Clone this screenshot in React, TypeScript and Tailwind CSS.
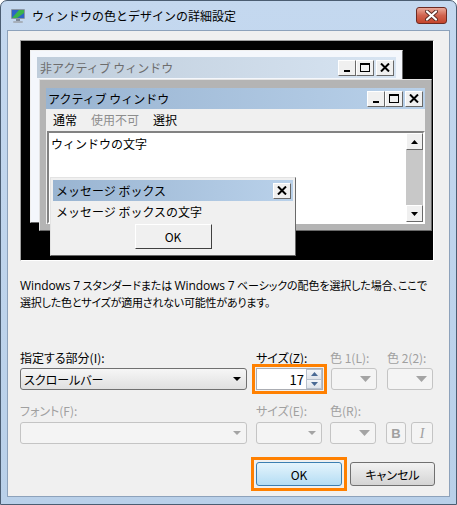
import React from 'react';

const raised = 'border border-t-white border-l-white border-r-[#696969] border-b-[#696969] bg-[#f0f0f0]';
const palt = "[font-feature-settings:'palt']";

function CapButton({ kind }: { kind: 'min' | 'max' | 'close' }) {
    return (
        <div className={`w-[18px] h-[16px] flex items-center justify-center ${raised}`}>
            {kind === 'min' && (
                <svg width="10" height="9" viewBox="0 0 10 9"><rect x="2" y="7" width="6" height="2" fill="#000" /></svg>
            )}
            {kind === 'max' && (
                <svg width="10" height="9" viewBox="0 0 10 9"><rect x="0.5" y="0.5" width="9" height="8" fill="none" stroke="#000" /><rect x="0" y="0" width="10" height="2" fill="#000" /></svg>
            )}
            {kind === 'close' && (
                <svg width="10" height="9" viewBox="0 0 10 9"><path d="M1 0.5 L9 8.5 M9 0.5 L1 8.5" stroke="#000" strokeWidth="2" /></svg>
            )}
        </div>
    );
}

function Arrow({ dir }: { dir: 'up' | 'down' }) {
    return (
        <div className={`w-[17px] h-[17px] flex items-center justify-center ${raised}`}>
            <svg width="7" height="4" viewBox="0 0 7 4">
                {dir === 'up' ? <path d="M0 4 L3.5 0 L7 4 Z" fill="#000" /> : <path d="M0 0 L7 0 L3.5 4 Z" fill="#000" />}
            </svg>
        </div>
    );
}

function Combo({ width, text, disabled, big }: { width: string; text?: string; disabled?: boolean; big?: boolean }) {
    return (
        <div
            className={`${width} h-[22px] rounded-[3px] border flex items-center pl-[3px] pr-[5px] ${
                disabled ? 'border-[#c4c4c4] bg-[#f4f4f4]' : 'border-[#707070] bg-gradient-to-b from-[#f6f6f6] to-[#e0e0e0]'
            }`}
        >
            <span className="flex-1 text-[12px] leading-[15px] text-black">{text}</span>
            {big ? (
                <svg width="11" height="6" viewBox="0 0 11 6"><path d="M0 0 L11 0 L5.5 6 Z" fill="#a4a4a4" /></svg>
            ) : (
                <svg width="8" height="4" viewBox="0 0 8 4"><path d="M0 0 L8 0 L4 4 Z" fill={disabled ? '#a4a4a4' : '#000'} /></svg>
            )}
        </div>
    );
}

function Preview() {
    return (
        <div className="relative w-[414px] h-[221px] bg-black border border-t-[#a0a0a0] border-l-[#a0a0a0] border-r-white border-b-white overflow-hidden text-[12px] leading-[15px]">
            {/* inactive window */}
            <div className="absolute left-[9px] top-[9px] w-[373px] h-[173px] border border-t-[#f0f0f0] border-l-[#f0f0f0] border-r-[#696969] border-b-[#696969] bg-[#f4f7fc] px-[6px] pt-[6px]">
                <div className="h-[21px] flex items-center pl-[3px] pr-[2px] bg-gradient-to-r from-[#bfcddb] to-[#d7e4f2]">
                    <span className="flex-1 text-[#6d6d6d]">非アクティブ ウィンドウ</span>
                    <div className="flex">
                        <CapButton kind="min" />
                        <CapButton kind="max" />
                        <div className="ml-[2px]"><CapButton kind="close" /></div>
                    </div>
                </div>
            </div>

            {/* active window */}
            <div className="absolute left-[18px] top-[38px] w-[393px] h-[152px] border border-t-[#e3e3e3] border-l-[#e3e3e3] border-r-[#696969] border-b-[#696969] bg-[#b4b4b4] px-[6px] pt-[8px] pb-[6px] flex flex-col">
                <div className="h-[21px] flex items-center pl-[2px] pr-[2px] bg-gradient-to-r from-[#99b4d1] to-[#b9d1ea]">
                    <span className="flex-1 text-black">アクティブ ウィンドウ</span>
                    <div className="flex">
                        <CapButton kind="min" />
                        <CapButton kind="max" />
                        <div className="ml-[2px]"><CapButton kind="close" /></div>
                    </div>
                </div>
                <div className="flex-1 bg-[#f0f0f0] flex flex-col">
                    <div className="h-[21px] flex items-center pl-[7px]">
                        <span className="text-black">通常</span>
                        <span className="ml-[14px] text-[#8d8d8d]">使用不可</span>
                        <span className="ml-[14px] text-black">選択</span>
                    </div>
                    <div className="mt-[1px] ml-[1px] h-[93px] w-[378px] border-2 border-t-[#828282] border-l-[#828282] border-r-white border-b-white bg-white flex">
                        <div className="flex-1 pl-[2px] pt-[3px] text-black">ウィンドウの文字</div>
                        <div className="w-[17px] bg-[#c8c8c8] flex flex-col justify-between">
                            <Arrow dir="up" />
                            <Arrow dir="down" />
                        </div>
                    </div>
                </div>
            </div>

            {/* message box */}
            <div className="absolute left-[29px] top-[136px] w-[246px] h-[79px] border border-t-[#e3e3e3] border-l-[#e3e3e3] border-r-[#696969] border-b-[#696969] bg-[#f0f0f0] p-[2px] flex flex-col">
                <div className="h-[21px] flex items-center pl-[3px] pr-[2px] bg-gradient-to-r from-[#99b4d1] to-[#b9d1ea]">
                    <span className="flex-1 text-black">メッセージ ボックス</span>
                    <CapButton kind="close" />
                </div>
                <div className="pl-[3px] pt-[3px] text-black">メッセージ ボックスの文字</div>
                <div className="mt-[5px] flex justify-center">
                    <div className="w-[77px] h-[25px] border border-t-white border-l-white border-r-[#404040] border-b-[#404040] bg-[#f0f0f0] flex items-center justify-center text-black">
                        OK
                    </div>
                </div>
            </div>
        </div>
    );
}

function Win({ children }: { children: React.ReactNode }) {
    return <span className="text-[12px] font-['Open_Sans',sans-serif]">{children}</span>;
}

export default function App() {
    return (
        <div className="w-[457px] h-[505px] font-['Noto_Sans_CJK_JP',sans-serif] text-black">
            <div className="w-full h-full rounded-t-[7px] border border-[#4b5d72] bg-gradient-to-b from-[#c4d8ef] to-[#b9d0e9] flex flex-col">
                {/* title bar */}
                <div className="h-[29px] flex items-center pl-[9px] pr-[9px]">
                    <svg width="16" height="16" viewBox="0 0 16 16">
                        <rect x="1" y="1" width="14" height="10" rx="1" fill="#8a96a4" />
                        <rect x="2" y="2" width="12" height="8" fill="#2f63c6" />
                        <path d="M2 10 L9 2 L14 2 L14 5 L7 10 Z" fill="#3bb44a" />
                        <rect x="6" y="11" width="4" height="2" fill="#7d8794" />
                        <rect x="3" y="13" width="10" height="2" rx="1" fill="#a7b0bb" />
                    </svg>
                    <span className="ml-[6px] flex-1 text-[12px] leading-[15px] text-black">ウィンドウの色とデザインの詳細設定</span>
                    <div className="w-[31px] h-[17px] rounded-[3px] border border-[#6d2a22] bg-gradient-to-b from-[#e9a99a] via-[#d0634f] to-[#c4442c] flex items-center justify-center">
                        <svg width="13" height="11" viewBox="0 0 13 11">
                            <path d="M2 1.5 L11 9.5 M11 1.5 L2 9.5" stroke="#5a2a24" strokeWidth="4" strokeLinecap="round" />
                            <path d="M2 1.5 L11 9.5 M11 1.5 L2 9.5" stroke="#fff" strokeWidth="2.2" strokeLinecap="round" />
                        </svg>
                    </div>
                </div>

                {/* content */}
                <div className={`mx-[6px] h-[467px] border border-[#8da2bb] bg-[#f0f0f0] pl-[12px] pt-[9px] text-[12px] leading-[15px] ${palt}`}>
                    <div className="[font-feature-settings:normal]">
                        <Preview />
                    </div>

                    <div className="mt-[16px] text-[11px] leading-[17px] whitespace-nowrap">
                        <div className="tracking-[-0.1px]">
                            <Win>Windows 7</Win> スタンダードまたは <Win>Windows 7</Win> ベーシックの配色を選択した場合、ここで
                        </div>
                        <div className="tracking-[-0.2px]">選択した色とサイズが適用されない可能性があります。</div>
                    </div>

                    <div className="mt-[39px] flex">
                        <div className="w-[236px]">指定する部分(I):</div>
                        <div className="w-[74px]">サイズ(Z):</div>
                        <div className="w-[57px] text-[#a0a0a0]">色 1(L):</div>
                        <div className="text-[#a0a0a0]">色 2(2):</div>
                    </div>
                    <div className="mt-[3px] flex items-center">
                        <Combo width="w-[227px]" text="スクロールバー" />
                        <div className="ml-[9px] w-[67px] h-[22px] border border-[#abadb3] bg-white flex items-center outline-[3px] outline-solid outline-[#ff8000] outline-offset-[1px]">
                            <span className="flex-1 text-right pr-[2px] text-[13px]">17</span>
                            <div className="w-[16px] h-full flex flex-col">
                                <div className="flex-1 border border-[#b7c0cc] bg-gradient-to-b from-[#f4f6f8] to-[#dfe4ea] flex items-center justify-center">
                                    <svg width="7" height="4" viewBox="0 0 7 4"><path d="M0 4 L3.5 0 L7 4 Z" fill="#4a6a94" /></svg>
                                </div>
                                <div className="flex-1 border border-t-0 border-[#b7c0cc] bg-gradient-to-b from-[#f4f6f8] to-[#dfe4ea] flex items-center justify-center">
                                    <svg width="7" height="4" viewBox="0 0 7 4"><path d="M0 0 L7 0 L3.5 4 Z" fill="#4a6a94" /></svg>
                                </div>
                            </div>
                        </div>
                        <div className="ml-[8px]"><Combo width="w-[46px]" disabled big /></div>
                        <div className="ml-[10px]"><Combo width="w-[46px]" disabled big /></div>
                    </div>

                    <div className="mt-[13px] flex text-[#a0a0a0]">
                        <div className="w-[236px]">フォント(F):</div>
                        <div className="w-[74px]">サイズ(E):</div>
                        <div>色(R):</div>
                    </div>
                    <div className="mt-[4px] flex items-center">
                        <Combo width="w-[227px]" disabled />
                        <div className="ml-[9px]"><Combo width="w-[66px]" disabled /></div>
                        <div className="ml-[8px]"><Combo width="w-[46px]" disabled big /></div>
                        <div className="ml-[10px] w-[20px] h-[22px] rounded-[3px] border border-[#c4c4c4] bg-[#f4f4f4] flex items-center justify-center text-[#a0a0a0] font-bold text-[13px] font-['Liberation_Sans',sans-serif]">B</div>
                        <div className="ml-[5px] w-[22px] h-[22px] rounded-[3px] border border-[#c4c4c4] bg-[#f4f4f4] flex items-center justify-center text-[#a0a0a0] italic text-[14px] font-['Liberation_Serif',serif]">I</div>
                    </div>

                    <div className="mt-[18px] flex items-center justify-end pr-[14px]">
                        <div className="-my-[5px] border-[3px] border-[#ff8000] p-[2px]">
                            <div className="w-[86px] h-[24px] rounded-[3px] border border-[#3c7fb1] bg-gradient-to-b from-[#e5f4fc] to-[#b4ddf4] flex items-center justify-center text-[12px]">
                                OK
                            </div>
                        </div>
                        <div className="ml-[3px] w-[85px] h-[24px] rounded-[3px] border border-[#707070] bg-gradient-to-b from-[#f2f2f2] to-[#d4d4d4] flex items-center justify-center text-[12px]">
                            キャンセル
                        </div>
                    </div>
                </div>
            </div>
        </div>
    );
}
